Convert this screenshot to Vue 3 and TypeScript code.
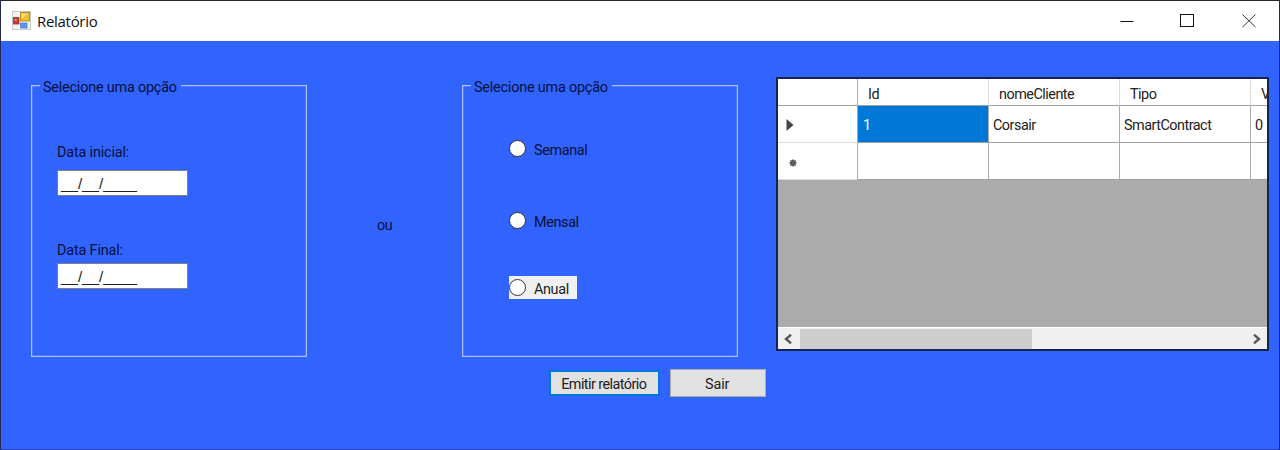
<script setup lang="ts">
import { ref } from 'vue'

interface DateField { id: string; label: string; value: string }
interface Period { id: string; label: string; focused: boolean }

const dates = ref<DateField[]>([
  { id: 'inicial', label: 'Data inicial:', value: '__/__/____' },
  { id: 'final', label: 'Data Final:', value: '__/__/____' },
])
const periods: Period[] = [
  { id: 'semanal', label: 'Semanal', focused: false },
  { id: 'mensal', label: 'Mensal', focused: false },
  { id: 'anual', label: 'Anual', focused: true },
]
const columns: string[] = ['Id', 'nomeCliente', 'Tipo', 'V']
const record: string[] = ['1', 'Corsair', 'SmartContract', '0']
</script>

<template>
  <div class="window">
    <header class="titlebar">
      <svg class="app-icon" width="19" height="19" viewBox="0 0 19 19">
        <rect x=".5" y=".5" width="18" height="18" fill="#f1f1f1" stroke="#c9c9c9" />
        <path d="M1 6.5H7M7.5 1V18M8 11H18" stroke="#fff" stroke-width="1.5" />
        <rect x="1.5" y="6.5" width="5.5" height="6.5" fill="#c63a32" stroke="#93302e" stroke-width=".8" />
        <rect x="2.5" y="8" width="2" height="2" fill="#ee8c7c" />
        <rect x="8.5" y="1.5" width="9" height="8.5" fill="#f0c030" stroke="#b98b1f" />
        <path d="M9.5 8V2.5H16z" fill="#fbe07a" />
        <rect x="8.5" y="12" width="6.5" height="5" fill="#5b96e8" stroke="#4a7fd0" stroke-width=".8" />
      </svg>
      <h1 class="title">Relatório</h1>
      <div class="controls">
        <svg width="14" height="14" viewBox="0 0 14 14"><path d="M.5 7.5H13.5" /></svg>
        <svg width="14" height="14" viewBox="0 0 14 14"><rect x=".5" y=".5" width="13" height="12" /></svg>
        <svg class="close" width="14" height="14" viewBox="0 0 14 14"><path d="M.5 .5L13.5 13M13.5 .5L.5 13" /></svg>
      </div>
    </header>

    <main class="client">
      <section class="group dates">
        <div class="legend"><span class="txt">Selecione uma opção</span></div>
        <div v-for="d in dates" :key="d.id" class="field" :class="d.id">
          <div class="caption"><span class="txt">{{ d.label }}</span></div>
          <div class="input"><span class="mask">{{ d.value }}</span></div>
        </div>
      </section>

      <div class="or"><span class="txt">ou</span></div>

      <section class="group periods">
        <div class="legend"><span class="txt">Selecione uma opção</span></div>
        <div v-for="p in periods" :key="p.id" class="radio" :class="[p.id, { focused: p.focused }]">
          <span class="dot"></span><span class="txt radio-label">{{ p.label }}</span>
        </div>
      </section>

      <section class="datagrid">
        <div class="row head">
          <div class="cell"></div>
          <div v-for="c in columns" :key="c" class="cell"><span class="txt">{{ c }}</span></div>
        </div>
        <div class="row">
          <div class="cell marker"><svg width="8" height="12" viewBox="0 0 8 12"><path d="M.5 0L7.5 6L.5 12z" fill="#444" /></svg></div>
          <div v-for="(v, i) in record" :key="v" class="cell" :class="{ selected: i === 0 }"><span class="txt">{{ v }}</span></div>
        </div>
        <div class="row blank">
          <div class="cell marker star"><svg width="8" height="8" viewBox="0 0 8 8"><circle cx="4" cy="4" r="3" fill="#4a4a4a" /><path d="M4 0V8M0 4H8M1.2 1.2L6.8 6.8M6.8 1.2L1.2 6.8" stroke="#666" stroke-width=".9" /></svg></div>
          <div v-for="c in columns" :key="c" class="cell"></div>
        </div>
        <div class="scrollbar">
          <svg width="8" height="10" viewBox="0 0 8 10"><path d="M7 .7L2 5L7 9.3" /></svg>
          <div class="track"><div class="thumb"></div></div>
          <svg width="8" height="10" viewBox="0 0 8 10"><path d="M1 .7L6 5L1 9.3" /></svg>
        </div>
      </section>

      <div class="actions">
        <button class="emit"><span class="txt">Emitir relatório</span></button>
        <button class="exit"><span class="txt">Sair</span></button>
      </div>
    </main>
  </div>
</template>

<style>
body { margin: 0; overflow: hidden; }
</style>

<style scoped>
* { box-sizing: border-box; }
.window {
  width: 1280px; height: 450px;
  border: 1px solid #20295a; border-top-color: #272631; border-bottom-color: #2844a6;
  background: #3163ff; color: #07113a;
  font: 15.5px/18px Roboto, "Liberation Sans", sans-serif;
  white-space: nowrap;
}
.txt { display: inline-block; transform: scaleX(.93); transform-origin: 0 50%; letter-spacing: -.4px; }
.titlebar { height: 40px; background: #fff; display: flex; align-items: center; padding: 0 23px 0 11px; }
.app-icon { margin-top: -2px; }
.title { margin: 0 0 0 6px; font: 400 15px/20px "Open Sans", "Noto Sans", sans-serif; color: #111; letter-spacing: -.3px; }
.controls { margin-left: auto; display: flex; gap: 47px; }
.controls svg { fill: none; stroke: #111; stroke-width: 1; display: block; }
.controls svg:nth-child(2) { margin-left: -1px; margin-right: 1px; }
.controls .close { stroke: #333; }
.client {
  display: grid; height: 408px; padding: 36px 10px 0 30px;
  grid-template-columns: 276px 155px 276px 38px 493px;
  grid-template-rows: 291px auto;
}
.group { height: 272px; margin-top: 8px; border: 1px solid #a9c0ff; box-shadow: inset 0 0 0 .5px #7295ff; }
.legend { width: 141px; height: 20px; margin: -9px 0 0 8px; padding: 1px 0 0 3px; background: #3163ff; }
.legend .txt { letter-spacing: -.22px; }
.field { margin-left: 25px; }
.field.inicial { margin-top: 46px; }
.field.final { margin-top: 45px; }
.caption { height: 18px; }
.caption .txt { letter-spacing: -.18px; }
.input { width: 131px; height: 26px; margin-top: 9px; border: 1px solid #7a7f91; background: #fff; color: #222; padding: 4px 0 0 3px; }
.mask { display: block; font: 15.2px/18px "Liberation Sans", sans-serif; }
.final .input { margin-top: 4px; }
.or { padding: 139px 0 0 70px; }
.radio { display: flex; align-items: center; width: 68px; height: 23px; margin-left: 46px; }
.semanal { margin-top: 40px; }
.mensal { margin-top: 49px; }
.anual { margin-top: 44px; }
.focused { background: #f0f0f0; color: #222; }
.dot { flex: none; width: 17px; height: 17px; border: 1px solid #333; border-radius: 50%; background: #fff; }
.radio-label { margin-left: 8px; margin-top: 2px; }
.datagrid { grid-column: 5; height: 274px; border: 2px solid #17234f; background: #ababab; overflow: hidden; display: flex; flex-direction: column; color: #222; }
.row { flex: none; display: grid; grid-template-columns: 80px repeat(4, 131px); height: 37px; }
.head { height: 27px; }
.cell { background: #fff; border-right: 1px solid #aaa; border-bottom: 1px solid #a0a0a0; padding: 2px 0 0 4px; display: flex; align-items: center; }
.cell .txt { letter-spacing: -.55px; }
.head .cell { padding: 4px 0 0 10px; border-right-color: #ddd; }
.head .cell:first-child { border-right-color: #aaa; }
.cell.selected { background: #0078d7; color: #fff; padding-left: 5px; }
.cell.marker { padding-left: 8px; border-bottom-color: #ddd; }
.cell.star { padding: 3px 0 0 11px; }
.scrollbar { margin-top: auto; height: 22px; background: #f0f0f0; display: flex; align-items: center; padding: 0 6px; border-top: 1px solid #fff; }
.scrollbar svg { fill: none; stroke: #555; stroke-width: 2.4; }
.track { flex: 1; margin: 0 8px; height: 20px; }
.thumb { width: 232px; height: 20px; background: #cdcdcd; }
.actions { grid-column: 3 / 6; margin-left: 88px; display: flex; gap: 10px; align-items: flex-start; }
button { font: inherit; color: #222; background: #e1e1e1; padding: 2px 0 0; border: 1px solid #adadad; display: flex; justify-content: center; align-items: center; }
button .txt { transform-origin: 50% 50%; letter-spacing: -.6px; margin-left: -2px; }
.emit { width: 111px; height: 26px; margin: 2px 0 0 -1px; border: 2px solid #0078d7; }
.exit { width: 96px; height: 28px; margin-top: 1px; }
.exit .txt { letter-spacing: -.1px; }
</style>
